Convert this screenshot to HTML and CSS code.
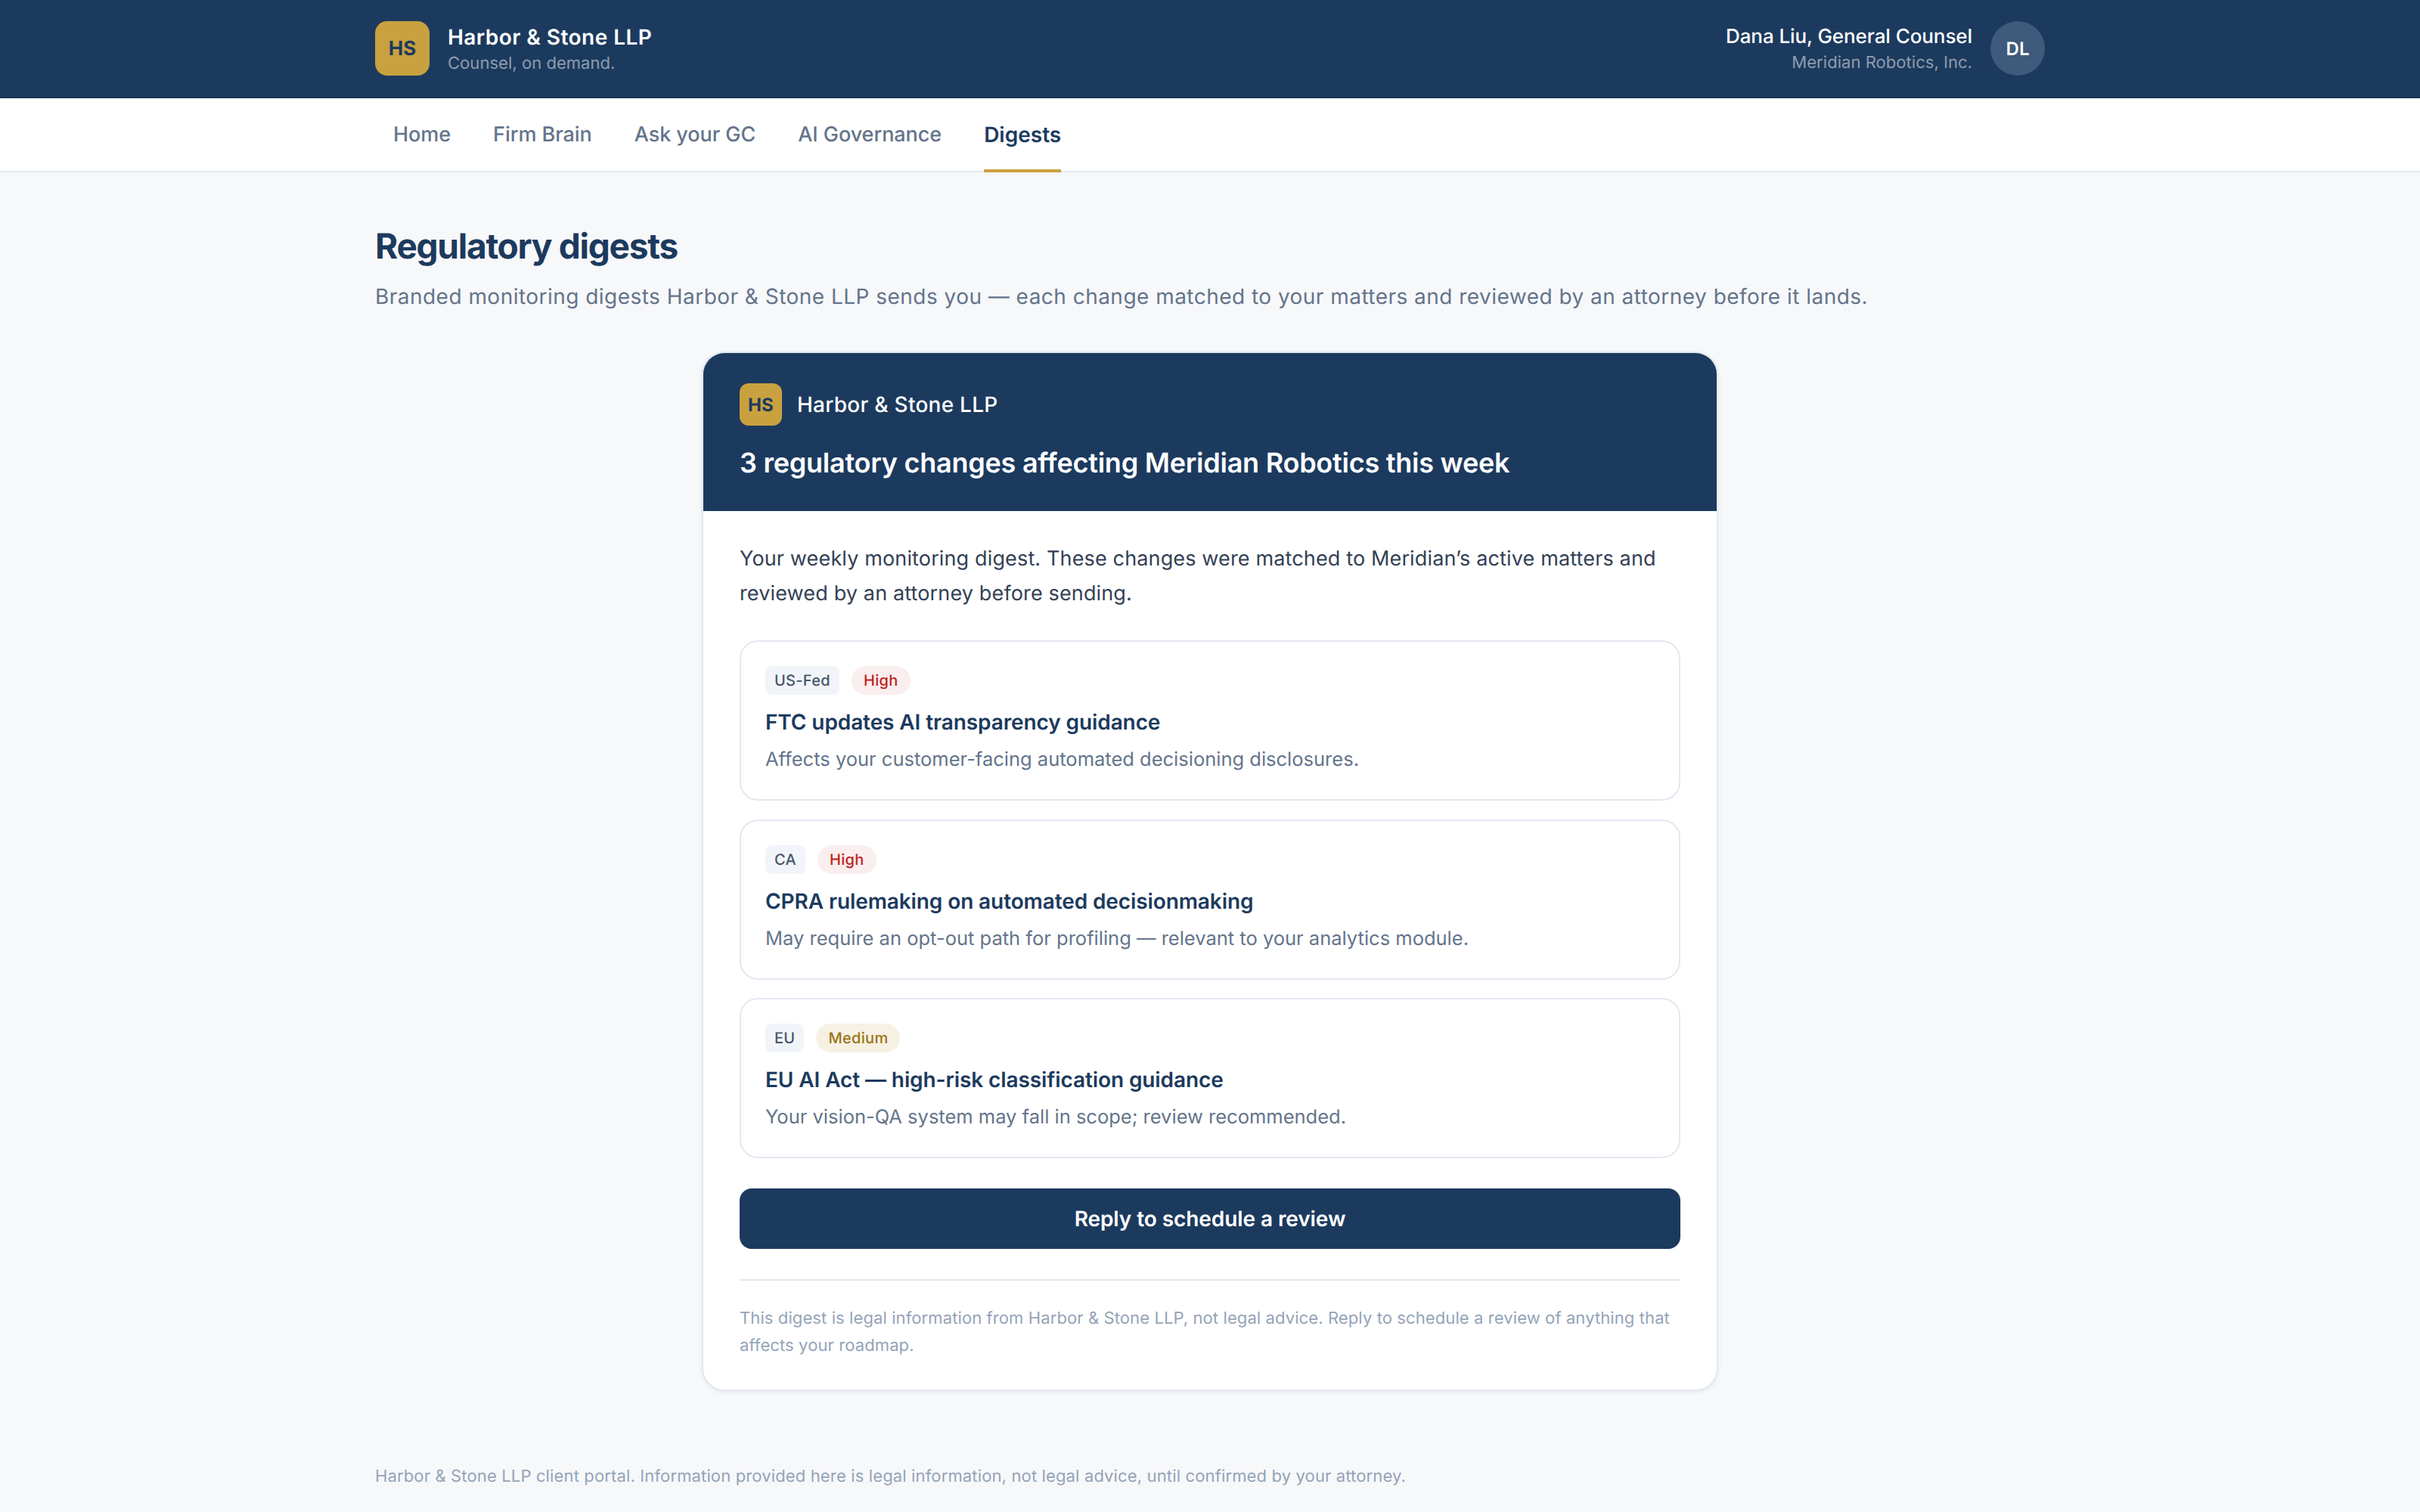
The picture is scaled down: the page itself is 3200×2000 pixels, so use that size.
FILE: index.html
```html
<!DOCTYPE html>
<html>
<head>
    <meta charset="UTF-8">
    <title>Regulatory digests</title>
    <link rel="stylesheet" href="styles.css">
</head>
<body>
<header class="topbar">
    <div class="wrap topbar-inner">
        <div class="brand">
            <div class="logo">HS</div>
            <div>
                <div class="brand-name">Harbor &amp; Stone LLP</div>
                <div class="brand-tag">Counsel, on demand.</div>
            </div>
        </div>
        <div class="user">
            <div class="user-text">
                <div class="user-name">Dana Liu, General Counsel</div>
                <div class="user-org">Meridian Robotics, Inc.</div>
            </div>
            <div class="avatar">DL</div>
        </div>
    </div>
</header>

<nav class="tabs">
    <div class="wrap tabs-inner">
        <a class="tab">Home</a>
        <a class="tab">Firm Brain</a>
        <a class="tab">Ask your GC</a>
        <a class="tab">AI Governance</a>
        <a class="tab active">Digests</a>
    </div>
</nav>

<main class="wrap main">
    <h1>Regulatory digests</h1>
    <p class="lead">Branded monitoring digests Harbor &amp; Stone LLP sends you — each change matched to your matters and reviewed by an attorney before it lands.</p>

    <section class="digest">
        <div class="digest-head">
            <div class="digest-brand">
                <div class="logo small">HS</div>
                <span>Harbor &amp; Stone LLP</span>
            </div>
            <h2>3 regulatory changes affecting Meridian Robotics this week</h2>
        </div>
        <div class="digest-body">
            <p class="intro">Your weekly monitoring digest. These changes were matched to Meridian’s active matters and reviewed by an attorney before sending.</p>

            <div class="change">
                <div class="tags"><span class="tag">US-Fed</span><span class="pill high">High</span></div>
                <h3>FTC updates AI transparency guidance</h3>
                <p>Affects your customer-facing automated decisioning disclosures.</p>
            </div>
            <div class="change">
                <div class="tags"><span class="tag">CA</span><span class="pill high">High</span></div>
                <h3>CPRA rulemaking on automated decisionmaking</h3>
                <p>May require an opt-out path for profiling — relevant to your analytics module.</p>
            </div>
            <div class="change">
                <div class="tags"><span class="tag">EU</span><span class="pill medium">Medium</span></div>
                <h3>EU AI Act — high-risk classification guidance</h3>
                <p>Your vision-QA system may fall in scope; review recommended.</p>
            </div>

            <a class="reply">Reply to schedule a review</a>

            <p class="fineprint">This digest is legal information from Harbor &amp; Stone LLP, not legal advice. Reply to schedule a review of anything that affects your roadmap.</p>
        </div>
    </section>

    <footer class="foot">Harbor &amp; Stone LLP client portal. Information provided here is legal information, not legal advice, until confirmed by your attorney.</footer>
</main>
</body>
</html>
```

FILE: styles.css
```css
* {
    box-sizing: border-box;
}

body, h1, h2, h3, p {
    margin: 0;
    padding: 0;
}

body {
    background: #f7f8fa;
    color: #334155;
    font-family: Inter, "Liberation Sans", sans-serif;
    font-size: 28px;
    text-rendering: geometricPrecision;
}

.wrap {
    margin: 0 auto;
    width: 2208px;
}

.topbar {
    height: 130px;
    background: #1c3a5e;
    border-bottom: 2px solid #1a3654;
}

.topbar-inner {
    display: flex;
    align-items: center;
    justify-content: space-between;
    height: 128px;
}

.brand, .user {
    display: flex;
    align-items: center;
    gap: 24px;
}

.logo {
    display: flex;
    align-items: center;
    justify-content: center;
    width: 72px;
    height: 72px;
    border-radius: 16px;
    background: #c9a13f;
    color: #1c3a5e;
    font-size: 26px;
    font-weight: 700;
}

.logo.small {
    width: 56px;
    height: 56px;
    border-radius: 12px;
    font-size: 24px;
}

.brand-name {
    color: #fff;
    font-size: 28px;
    font-weight: 600;
    line-height: 40px;
    letter-spacing: 0.45px;
}

.brand-tag, .user-org {
    color: rgba(255, 255, 255, 0.5);
    font-size: 22px;
    line-height: 30px;
    letter-spacing: 0.04px;
}

.user-text {
    text-align: right;
}

.user-name {
    color: #fff;
    font-size: 26px;
    font-weight: 500;
    line-height: 38px;
    letter-spacing: -0.08px;
}

.avatar {
    display: flex;
    align-items: center;
    justify-content: center;
    width: 72px;
    height: 72px;
    border-radius: 50%;
    background: #3f5a7a;
    color: #fff;
    font-size: 24px;
    font-weight: 600;
}

.tabs {
    height: 98px;
    background: #fff;
    border-bottom: 2px solid #e2e8f0;
}

.tabs-inner {
    display: flex;
    gap: 8px;
}

.tab {
    height: 98px;
    padding: 0 24px;
    color: #64748b;
    font-size: 27px;
    font-weight: 500;
    line-height: 96px;
    letter-spacing: -0.05px;
}

.tab.active {
    padding: 0;
    margin: 0 24px;
    color: #1c3a5e;
    font-size: 28px;
    font-weight: 600;
    letter-spacing: 0;
    border-bottom: 4px solid #c9a13f;
}

h1 {
    padding-top: 72px;
    color: #1c3a5e;
    font-size: 46px;
    font-weight: 700;
    line-height: 52px;
    letter-spacing: -1.25px;
}

.lead {
    margin-top: 16px;
    color: #64748b;
    font-size: 28px;
    line-height: 48px;
    letter-spacing: 0.47px;
}

.digest {
    margin: 49px auto 0;
    width: 1344px;
    background: #fff;
    border: 2px solid #e2e8f0;
    border-radius: 30px;
    box-shadow: 0 2px 6px rgba(15, 23, 42, 0.06);
    overflow: hidden;
}

.digest-head {
    padding: 40px 48px 39px;
    background: #1c3a5e;
}

.digest-brand {
    display: flex;
    align-items: center;
    gap: 20px;
    color: #fff;
    font-size: 28px;
    font-weight: 500;
    letter-spacing: 0.25px;
}

h2 {
    margin-top: 24px;
    color: #fff;
    font-size: 36px;
    font-weight: 600;
    line-height: 50px;
    letter-spacing: -0.25px;
}

.digest-body {
    padding: 40px 48px 40px;
}

.intro {
    color: #334155;
    font-size: 27px;
    line-height: 46px;
    letter-spacing: 0.14px;
}

.change {
    margin-top: 24.5px;
    padding: 32px 32px 28px;
    height: 212px;
    border: 2px solid #e2e8f0;
    border-radius: 24px;
}

.intro + .change {
    margin-top: 39px;
}

.tags {
    display: flex;
    gap: 16px;
}

.tag, .pill {
    height: 38px;
    padding: 0 12px;
    border-radius: 8px;
    background: #f1f5f9;
    color: #475569;
    font-size: 20px;
    font-weight: 500;
    line-height: 38px;
    letter-spacing: 0.3px;
}

.pill {
    padding: 0 16px;
    border-radius: 19px;
}

.pill.high {
    background: #faeeee;
    color: #c11f1f;
}

.pill.medium {
    background: #f6f1e3;
    color: #9a7416;
}

h3 {
    margin-top: 16px;
    color: #1c3a5e;
    font-size: 28px;
    font-weight: 600;
    line-height: 40px;
    letter-spacing: -0.1px;
}

.change p {
    margin-top: 10px;
    color: #64748b;
    font-size: 25.5px;
    line-height: 40px;
}

.reply {
    display: block;
    margin-top: 40px;
    height: 80px;
    border-radius: 16px;
    background: #1c3a5e;
    color: #fff;
    font-size: 28px;
    font-weight: 600;
    line-height: 80px;
    letter-spacing: -0.08px;
    text-align: center;
}

.fineprint {
    margin-top: 40px;
    padding-top: 32px;
    border-top: 2px solid #e2e8f0;
    color: #94a3b8;
    font-size: 22px;
    line-height: 36px;
    letter-spacing: 0.1px;
}

.foot {
    margin-top: 96px;
    color: #94a3b8;
    font-size: 22px;
    line-height: 35px;
    letter-spacing: 0.14px;
}
```
